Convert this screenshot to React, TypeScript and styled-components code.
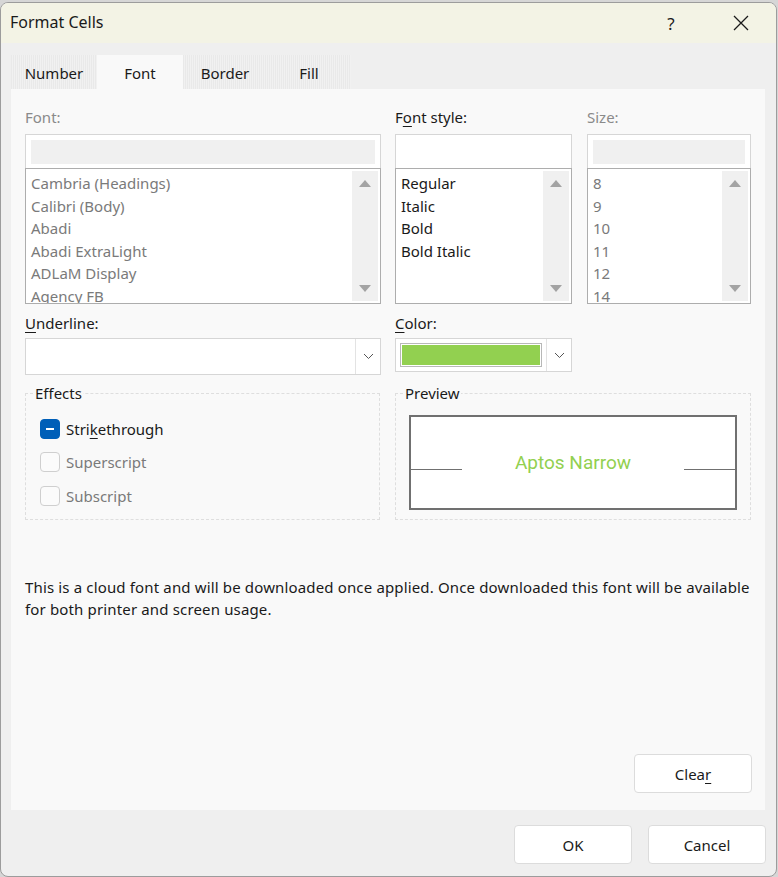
import React from 'react';
import styled, { createGlobalStyle } from 'styled-components';

const GlobalStyle = createGlobalStyle`
  html, body {
    margin: 0;
    padding: 0;
    background: #d6d6d6;
  }
  body {
    font-family: 'Noto Sans', 'Open Sans', sans-serif;
    font-size: 15px;
    color: #1a1a1a;
  }
`;

const Window = styled.div`
  box-sizing: border-box;
  width: 777px;
  height: 875px;
  margin-top: 2px;
  border: 1px solid #9c9c9c;
  border-radius: 8px;
  background: #efefef;
  overflow: hidden;
  display: flex;
  flex-direction: column;
`;

const TitleBar = styled.div`
  height: 40px;
  flex: 0 0 40px;
  background: #f3f3e5;
  display: flex;
  align-items: center;
  padding-left: 9px;
  .title {
    flex: 1;
    font-size: 16px;
    margin-top: -2px;
  }
`;

const TitleButton = styled.div`
  width: 70px;
  height: 40px;
  display: flex;
  align-items: center;
  justify-content: center;
  font-size: 17px;
  color: #1a1a1a;
`;

const TabRow = styled.div`
  display: flex;
  padding: 12px 0 0 10px;
  height: 34px;
`;

const Tab = styled.div<{ active?: boolean; w: number }>`
  width: ${({ w }) => w}px;
  height: 34px;
  display: flex;
  align-items: center;
  justify-content: center;
  padding-top: 1px;
  box-sizing: border-box;
  background: ${({ active }) =>
    active
      ? '#f9f9f9'
      : 'repeating-linear-gradient(90deg, #e9e9e9 0px, #e9e9e9 1px, #f1f1f1 1px, #f1f1f1 2px)'};
`;

const Panel = styled.div`
  margin-left: 10px;
  width: 754px;
  height: 721px;
  background: #f9f9f9;
  box-sizing: border-box;
  padding: 18px 13px 17px 14px;
  display: flex;
  flex-direction: column;
`;

const TopRow = styled.div`
  display: grid;
  grid-template-columns: 356px 177px 165px;
  column-gap: 14px;
  & > div:last-child {
    margin-left: 1px;
  }
`;

const Label = styled.div<{ disabled?: boolean }>`
  height: 20px;
  line-height: 20px;
  margin-bottom: 7px;
  color: ${({ disabled }) => (disabled ? '#8a8a8a' : '#1a1a1a')};
  u {
    text-underline-offset: 3px;
  }
`;

const EntryBox = styled.div<{ disabled?: boolean }>`
  box-sizing: border-box;
  height: 34px;
  border: 1px solid #d6d6d6;
  border-bottom: none;
  background: #ffffff;
  padding: 5px 5px;
  &::after {
    content: '';
    display: ${({ disabled }) => (disabled ? 'block' : 'none')};
    height: 24px;
    background: #f0f0f0;
  }
`;

const ListBox = styled.div`
  box-sizing: border-box;
  height: 136px;
  border: 1px solid #adadad;
  background: #ffffff;
  display: flex;
  overflow: hidden;
`;

const Items = styled.div<{ disabled?: boolean }>`
  flex: 1;
  padding: 3px 0 0 5px;
  color: ${({ disabled }) => (disabled ? '#7a7a7a' : '#1a1a1a')};
  div {
    line-height: 22.5px;
    white-space: nowrap;
  }
`;

const ScrollBar = styled.div`
  width: 26px;
  margin: 2px 2px 2px 0;
  background: #f0f0f0;
  display: flex;
  flex-direction: column;
  justify-content: space-between;
  align-items: center;
  padding: 9px 0 9px;
  box-sizing: border-box;
`;

const Arrow = styled.div<{ down?: boolean }>`
  width: 0;
  height: 0;
  border-left: 6px solid transparent;
  border-right: 6px solid transparent;
  ${({ down }) =>
    down ? 'border-top: 7px solid #a3a3a3;' : 'border-bottom: 7px solid #a3a3a3;'}
`;

const MidRow = styled.div`
  display: grid;
  grid-template-columns: 356px 177px;
  column-gap: 14px;
  margin-top: 9px;
  ${Label} {
    margin-bottom: 5px;
  }
`;

const Combo = styled.div<{ h: number }>`
  box-sizing: border-box;
  height: ${({ h }) => h}px;
  border: 1px solid #d6d6d6;
  background: #ffffff;
  display: flex;
  align-self: center;
`;

const ComboField = styled.div`
  flex: 1;
  display: flex;
  padding: 4px;
`;

const Swatch = styled.div<{ color: string }>`
  flex: 1;
  border: 1px solid #b8b8b8;
  padding: 1px;
  background: #fff;
  &::after {
    content: '';
    display: block;
    height: 100%;
    background: ${({ color }) => color};
  }
`;

const ComboButton = styled.div`
  width: 24px;
  border-left: 1px solid #e3e3e3;
  display: flex;
  align-items: center;
  justify-content: center;
`;

const GroupRow = styled.div`
  display: grid;
  grid-template-columns: 355px 356px;
  column-gap: 15px;
  margin-top: 8px;
`;

const Group = styled.fieldset`
  margin: 0;
  height: 137px;
  box-sizing: border-box;
  border: 1px dashed #dedede;
  padding: 0 13px 0 14px;
  legend {
    padding: 0 1px;
    margin-left: -6px;
    line-height: 20px;
  }
`;

const CheckRow = styled.div<{ disabled?: boolean }>`
  display: flex;
  align-items: center;
  gap: 6px;
  height: 33.5px;
  color: ${({ disabled }) => (disabled ? '#7a7a7a' : '#1a1a1a')};
  &:first-of-type {
    margin-top: 9px;
  }
  u {
    text-underline-offset: 3px;
  }
`;

const Box = styled.div<{ checked?: boolean }>`
  box-sizing: border-box;
  width: 20px;
  height: 20px;
  border-radius: 4px;
  border: 1px solid ${({ checked }) => (checked ? '#005fb8' : '#cfcfcf')};
  background: ${({ checked }) => (checked ? '#005fb8' : '#fbfbfb')};
  display: flex;
  align-items: center;
  justify-content: center;
  &::after {
    content: '';
    display: ${({ checked }) => (checked ? 'block' : 'none')};
    width: 8px;
    height: 1.5px;
    background: #ffffff;
  }
`;

const PreviewBox = styled.div`
  box-sizing: border-box;
  margin: 12px 0 0 -1px;
  height: 95px;
  border: 2px solid #707070;
  background: #ffffff;
  display: flex;
  align-items: center;
`;

const BaseLine = styled.div`
  width: 51px;
  height: 1px;
  background: #707070;
  margin-top: 14px;
`;

const PreviewText = styled.div`
  flex: 1;
  text-align: center;
  font-family: Roboto, 'Noto Sans', sans-serif;
  font-size: 19px;
  color: #92d050;
  margin-top: 0px;
`;

const Note = styled.p`
  margin: 56px 0 0;
  line-height: 22px;
  width: 730px;
  letter-spacing: 0.15px;
`;

const ClearRow = styled.div`
  margin-top: auto;
  display: flex;
  justify-content: flex-end;
`;

const Button = styled.div`
  box-sizing: border-box;
  width: 118px;
  height: 39px;
  background: #ffffff;
  border: 1px solid #dcdcdc;
  border-radius: 4px;
  display: flex;
  align-items: center;
  justify-content: center;
  u {
    text-underline-offset: 3px;
  }
`;

const Footer = styled.div`
  display: flex;
  justify-content: flex-end;
  gap: 16px;
  padding: 15px 10px 0 0;
`;

const Chevron = () => (
  <svg width='11' height='7' viewBox='0 0 11 7'>
    <path d='M1 1 L5.5 5.5 L10 1' fill='none' stroke='#555' strokeWidth='1' />
  </svg>
);

const CloseIcon = () => (
  <svg width='16' height='16' viewBox='0 0 16 16'>
    <path d='M1 1 L15 15 M15 1 L1 15' stroke='#1a1a1a' strokeWidth='1.3' />
  </svg>
);

const fonts = ['Cambria (Headings)', 'Calibri (Body)', 'Abadi', 'Abadi ExtraLight', 'ADLaM Display', 'Agency FB'];
const styles = ['Regular', 'Italic', 'Bold', 'Bold Italic'];
const sizes = ['8', '9', '10', '11', '12', '14'];

const List = ({ items, disabled }: { items: string[]; disabled?: boolean }) => (
  <ListBox>
    <Items disabled={disabled}>
      {items.map((i) => (
        <div key={i}>{i}</div>
      ))}
    </Items>
    <ScrollBar>
      <Arrow />
      <Arrow down />
    </ScrollBar>
  </ListBox>
);

const App = () => {
  return (
    <>
      <GlobalStyle />
      <Window>
        <TitleBar>
          <div className='title'>Format Cells</div>
          <TitleButton>?</TitleButton>
          <TitleButton>
            <CloseIcon />
          </TitleButton>
        </TitleBar>

        <TabRow>
          <Tab w={86}>Number</Tab>
          <Tab w={86} active>
            Font
          </Tab>
          <Tab w={84}>Border</Tab>
          <Tab w={84}>Fill</Tab>
        </TabRow>

        <Panel>
          <TopRow>
            <div>
              <Label disabled>Font:</Label>
              <EntryBox disabled />
              <List items={fonts} disabled />
            </div>
            <div>
              <Label>
                F<u>o</u>nt style:
              </Label>
              <EntryBox />
              <List items={styles} />
            </div>
            <div>
              <Label disabled>Size:</Label>
              <EntryBox disabled />
              <List items={sizes} disabled />
            </div>
          </TopRow>

          <MidRow>
            <div>
              <Label>
                <u>U</u>nderline:
              </Label>
              <Combo h={37}>
                <ComboField />
                <ComboButton>
                  <Chevron />
                </ComboButton>
              </Combo>
            </div>
            <div>
              <Label>
                <u>C</u>olor:
              </Label>
              <Combo h={34}>
                <ComboField>
                  <Swatch color='#92d050' />
                </ComboField>
                <ComboButton>
                  <Chevron />
                </ComboButton>
              </Combo>
            </div>
          </MidRow>

          <GroupRow>
            <Group>
              <legend>Effects</legend>
              <CheckRow>
                <Box checked />
                <span>
                  Stri<u>k</u>ethrough
                </span>
              </CheckRow>
              <CheckRow disabled>
                <Box />
                <span>Superscript</span>
              </CheckRow>
              <CheckRow disabled>
                <Box />
                <span>Subscript</span>
              </CheckRow>
            </Group>
            <Group>
              <legend>Preview</legend>
              <PreviewBox>
                <BaseLine />
                <PreviewText>Aptos Narrow</PreviewText>
                <BaseLine />
              </PreviewBox>
            </Group>
          </GroupRow>

          <Note>
            This is a cloud font and will be downloaded once applied. Once downloaded this font will be available
            for both printer and screen usage.
          </Note>

          <ClearRow>
            <Button>
              Clea<u>r</u>
            </Button>
          </ClearRow>
        </Panel>

        <Footer>
          <Button>OK</Button>
          <Button>Cancel</Button>
        </Footer>
      </Window>
    </>
  );
};

export default App;
